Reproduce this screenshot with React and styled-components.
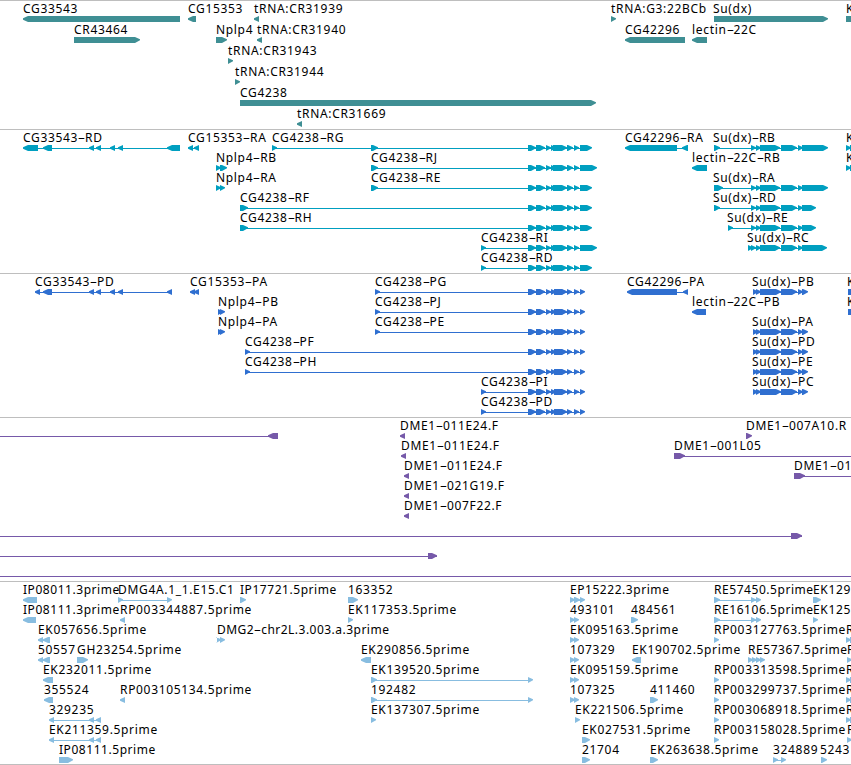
import React from "react";
import styled, { createGlobalStyle } from "styled-components";

const GlobalStyle = createGlobalStyle`
    body {
        margin: 0;
        background: #fff;
        overflow: hidden;
    }
`;

const Browser = styled.main`
    width: 851px;
    height: 765px;
    display: flex;
    flex-direction: column;
    overflow: hidden;
    color: #000;
    font-family: "Noto Sans", "DejaVu Sans", sans-serif;
    font-size: 12px;
    line-height: 14px;
`;

const Track = styled.section`
    box-sizing: border-box;
    flex: none;
    height: ${(props) => props.$height}px;
    border-top: 1px solid #bebebe;
    color: ${(props) => props.$color};
`;

const BottomLine = styled.div`
    height: 1px;
    background: #bebebe;
`;

const Lane = styled.div`
    height: ${(props) => props.$pitch}px;
`;

const Labels = styled.div`
    position: relative;
    height: 15px;
`;

const Label = styled.span`
    position: absolute;
    top: 1px;
    left: ${(props) => props.$x}px;
    color: #000;
    letter-spacing: ${(props) => props.$spacing}px;
    white-space: pre;
`;

const Hyphen = styled.span`
    display: inline-block;
    width: 7px;
    letter-spacing: 0;
    text-align: center;
    transform: scaleX(1.9);
`;

const Glyphs = styled.svg`
    display: block;
    width: 851px;
    height: 6px;
    fill: currentColor;
`;

const L = "left";
const R = "right";

// exons shared by several transcripts
const tail = (end) => [[528, 536], [536, 545], [546, 551], [551, 556], [553, 567], [567, 573], [574, 579], [580, end]];
const tailP = [[528, 536], [536, 545], [546, 551], [551, 556], [554, 566], [560, 567], [567, 572], [574, 579], [580, 585]];
const sudx = (end) => [[751, 756], [756, 761], [760, 780], [781, 797], [798, 803], [802, end]];
const sudxP = [[753, 758], [756, 761], [760, 781], [781, 797], [798, 803], [802, 808]];

// every feature is [label, x, direction, exons, intron line]
const tracks = [
    {
        name: "genes",
        color: "#3f8f94",
        height: 129,
        pitch: 21,
        lanes: [
            [
                ["CG33543", 23, L, [[23, 180]]],
                ["CG15353", 188, L, [[188, 196]]],
                ["tRNA:CR31939", 254, L, [[254, 259]]],
                ["tRNA:G3:22BCb", 611, R, [[611, 616]]],
                ["Su(dx)", 713, R, [[714, 828]]],
                ["K", 846, R, [[846, 870]]],
            ],
            [
                ["CR43464", 74, R, [[74, 140]]],
                ["Nplp4", 216, R, [[216, 227]]],
                ["tRNA:CR31940", 257, L, [[257, 262]]],
                ["CG42296", 625, L, [[625, 685]]],
                ["lectin-22C", 692, L, [[692, 707]]],
            ],
            [["tRNA:CR31943", 228, R, [[228, 233]]]],
            [["tRNA:CR31944", 235, R, [[235, 240]]]],
            [["CG4238", 240, R, [[240, 596]]]],
            [["tRNA:CR31669", 297, L, [[297, 302]]]],
        ],
    },
    {
        name: "transcripts",
        color: "#009fc0",
        height: 144,
        pitch: 20,
        lanes: [
            [
                ["CG33543-RD", 23, L, [[23, 38], [43, 52], [89, 94], [96, 101], [110, 115], [118, 123], [167, 180]]],
                ["CG15353-RA", 188, L, [[188, 193], [194, 199]]],
                ["CG4238-RG", 272, R, [[272, 277], [371, 378], ...tail(592)]],
                ["CG42296-RA", 625, L, [[625, 677], [682, 688]]],
                ["Su(dx)-RB", 713, R, [[714, 720], ...sudx(828)]],
                ["K", 846, R, [[846, 851], [850, 870]]],
            ],
            [
                ["Nplp4-RB", 216, R, [[216, 221], [220, 227]]],
                ["CG4238-RJ", 371, R, [[371, 378], ...tail(597)]],
                ["lectin-22C-RB", 692, L, [[692, 707]]],
                ["K", 846, R, [[846, 851], [850, 870]]],
            ],
            [
                ["Nplp4-RA", 216, R, [[216, 221], [220, 225]]],
                ["CG4238-RE", 371, R, [[371, 378], ...tail(592)]],
                ["Su(dx)-RA", 713, R, [[714, 723], ...sudx(828)]],
            ],
            [
                ["CG4238-RF", 240, R, [[240, 248], ...tail(592)]],
                ["Su(dx)-RD", 713, R, [[714, 720], ...sudx(816)]],
            ],
            [
                ["CG4238-RH", 240, R, [[240, 248], ...tail(592)]],
                ["Su(dx)-RE", 727, R, [[728, 733], ...sudx(816)]],
            ],
            [
                ["CG4238-RI", 481, R, [[481, 486], ...tail(597)]],
                ["Su(dx)-RC", 747, R, [[748, 753], ...sudx(827)]],
            ],
            [["CG4238-RD", 481, R, [[481, 486], ...tail(592)]]],
        ],
    },
    {
        name: "proteins",
        color: "#2f6fd0",
        height: 144,
        pitch: 20,
        lanes: [
            [
                ["CG33543-PD", 35, L, [[35, 40], [43, 52], [89, 94], [96, 101], [110, 115], [118, 123], [167, 172]]],
                ["CG15353-PA", 190, L, [[190, 195], [194, 199]]],
                ["CG4238-PG", 375, R, [[375, 380], ...tailP]],
                ["CG42296-PA", 627, L, [[627, 677], [683, 688]]],
                ["Su(dx)-PB", 752, R, sudxP],
                ["K", 847, R, [[848, 870]]],
            ],
            [
                ["Nplp4-PB", 218, R, [[218, 223], [220, 225]]],
                ["CG4238-PJ", 375, R, [[375, 380], ...tailP]],
                ["lectin-22C-PB", 692, L, [[692, 706]]],
                ["K", 847, R, [[848, 870]]],
            ],
            [
                ["Nplp4-PA", 218, R, [[218, 223], [220, 225]]],
                ["CG4238-PE", 375, R, [[375, 380], ...tailP]],
                ["Su(dx)-PA", 752, R, sudxP],
            ],
            [
                ["CG4238-PF", 245, R, [[245, 250], ...tailP]],
                ["Su(dx)-PD", 752, R, sudxP],
            ],
            [
                ["CG4238-PH", 245, R, [[245, 250], ...tailP]],
                ["Su(dx)-PE", 752, R, sudxP],
            ],
            [
                ["CG4238-PI", 481, R, [[481, 486], ...tailP]],
                ["Su(dx)-PC", 752, R, sudxP],
            ],
            [["CG4238-PD", 481, R, [[481, 486], ...tailP]]],
        ],
    },
    {
        name: "bac ends",
        color: "#7659a9",
        height: 164,
        pitch: 20,
        lanes: [
            [
                ["", 0, L, [[268, 278]], [0, 278]],
                ["DME1-011E24.F", 400, L, [[400, 405]]],
                ["DME1-007A10.R", 746, R, [[746, 752]]],
            ],
            [
                ["DME1-011E24.F", 401, L, [[401, 406]]],
                ["DME1-001L05", 674, R, [[674, 685]], [674, 851]],
            ],
            [
                ["DME1-011E24.F", 404, L, [[404, 409]]],
                ["DME1-01", 794, R, [[794, 805]], [794, 851]],
            ],
            [["DME1-021G19.F", 404, L, [[404, 409]]]],
            [["DME1-007F22.F", 404, L, [[404, 409]]]],
            [["", 0, R, [[791, 802]], [0, 802]]],
            [["", 0, R, [[428, 437]], [0, 437]]],
            [["", 0, R, [], [0, 851]]],
        ],
    },
    {
        name: "ests",
        color: "#88bde0",
        height: 183,
        pitch: 20,
        lanes: [
            [
                ["IP08011.3prime", 23, L, [[23, 37]]],
                ["DMG4A.1_1.E15.C1", 118, R, [[118, 123], [167, 172]]],
                ["IP17721.5prime", 240, R, [[240, 246]]],
                ["163352", 348, R, [[348, 358]]],
                ["EP15222.3prime", 570, R, [[570, 575], [574, 580], [580, 585]]],
                ["RE57450.5prime", 714, R, [[714, 720], [751, 756], [756, 761]]],
                ["EK129", 813, R, [[813, 821]]],
            ],
            [
                ["IP08111.3prime", 23, L, [[23, 36]]],
                ["RP003344887.5prime", 120, L, [[120, 125]]],
                ["EK117353.5prime", 348, R, [[348, 353]]],
                ["493101", 570, R, [[570, 575], [574, 579]]],
                ["484561", 631, R, [[631, 638]]],
                ["RE16106.5prime", 714, R, [[714, 720], [751, 756], [756, 761]]],
                ["EK125", 813, R, [[813, 818]]],
            ],
            [
                ["EK057656.5prime", 38, L, [[38, 43], [43, 50]]],
                ["DMG2-chr2L.3.003.a.3prime", 217, R, [[217, 221], [220, 225]]],
                ["EK095163.5prime", 570, R, [[570, 575], [574, 579]]],
                ["RP003127763.5prime", 714, R, [[714, 719]]],
                ["R", 846, R, [[846, 851], [850, 870]]],
            ],
            [
                ["50557", 38, L, [[38, 43], [43, 50]]],
                ["GH23254.5prime", 77, R, [[77, 88]]],
                ["EK290856.5prime", 361, L, [[361, 371]]],
                ["107329", 570, R, [[570, 575], [574, 579]]],
                ["EK190702.5prime", 632, L, [[632, 641]]],
                ["RE57367.5prime", 748, R, [[748, 753], [752, 757], [756, 761], [760, 765]]],
                ["R", 847, R, [[847, 852], [851, 870]]],
            ],
            [
                ["EK232011.5prime", 43, L, [[43, 53]]],
                ["EK139520.5prime", 371, R, [[371, 377], [528, 533]]],
                ["EK095159.5prime", 570, R, [[570, 575], [574, 579]]],
                ["RP003313598.5prime", 714, R, [[714, 719]]],
                ["R", 846, R, [[846, 851], [850, 870]]],
            ],
            [
                ["355524", 44, L, [[44, 53]]],
                ["RP003105134.5prime", 120, L, [[120, 125]]],
                ["192482", 371, R, [[371, 377], [528, 533]]],
                ["107325", 570, R, [[570, 575], [574, 579]]],
                ["411460", 650, R, [[650, 658]]],
                ["RP003299737.5prime", 714, R, [[714, 719]]],
                ["R", 846, R, [[846, 851], [850, 870]]],
            ],
            [
                ["329235", 49, L, [[49, 54], [89, 94], [96, 101]]],
                ["EK137307.5prime", 371, R, [[371, 376]]],
                ["EK221506.5prime", 575, R, [[575, 580]]],
                ["RP003068918.5prime", 714, R, [[714, 719]]],
                ["R", 846, R, [[846, 851], [850, 870]]],
            ],
            [
                ["EK211359.5prime", 49, L, [[49, 54], [89, 94], [96, 101]]],
                ["EK027531.5prime", 582, R, [[582, 590]]],
                ["RP003158028.5prime", 714, R, [[714, 719]]],
                ["R", 847, R, [[847, 852], [851, 870]]],
            ],
            [
                ["IP08111.5prime", 59, R, [[59, 73]]],
                ["21704", 582, R, [[582, 590]]],
                ["EK263638.5prime", 650, R, [[650, 658]]],
                ["324889", 773, R, [[773, 778], [781, 786]]],
                ["5243", 820, R, [[821, 827]]],
            ],
        ],
    },
];

// bar with a blunt 5px arrow head on the side it reads to
const exonPath = (from, to, direction) => {
    if (direction === L) {
        return `M${to} 0H${from + 5}L${from} 2.2V3.8L${from + 5} 6H${to}Z`;
    }
    return `M${from} 0H${to - 5}L${to} 2.2V3.2L${to - 5} 6H${from}Z`;
};

const Feature = ({ direction, exons, line }) => {
    const [start, end] = line || [exons[0][0], exons[exons.length - 1][1]];
    const showLine = line || exons.length > 1;

    return (
        <g>
            {showLine && <rect x={start + (line ? 0 : 2)} y="3" width={end - start - (line ? 0 : 4)} height="1" />}
            {exons.map(([from, to], i) => (
                <path key={i} d={exonPath(from, to, direction)} />
            ))}
        </g>
    );
};

const labelSpacing = (text) => {
    if (text.length > 20) return 0.48;
    return /^(IP|RE|EP)/.test(text) ? 0.55 : 0.67;
};

const FeatureLabel = ({ text, x }) => (
    <Label $x={x} $spacing={labelSpacing(text)}>
        {text.split("-").map((part, i) => (
            <React.Fragment key={i}>
                {i > 0 && <Hyphen>-</Hyphen>}
                {part}
            </React.Fragment>
        ))}
    </Label>
);

const App = () => (
    <Browser>
        <GlobalStyle />
        {tracks.map((track) => (
            <Track key={track.name} $height={track.height} $color={track.color}>
                {track.lanes.map((lane, i) => (
                    <Lane key={i} $pitch={track.pitch}>
                        <Labels>
                            {lane.map(([text, x]) => text && <FeatureLabel key={x} text={text} x={x} />)}
                        </Labels>
                        <Glyphs>
                            {lane.map(([, x, direction, exons, line]) => (
                                <Feature key={x} direction={direction} exons={exons} line={line} />
                            ))}
                        </Glyphs>
                    </Lane>
                ))}
            </Track>
        ))}
        <BottomLine />
    </Browser>
);

export default App;
